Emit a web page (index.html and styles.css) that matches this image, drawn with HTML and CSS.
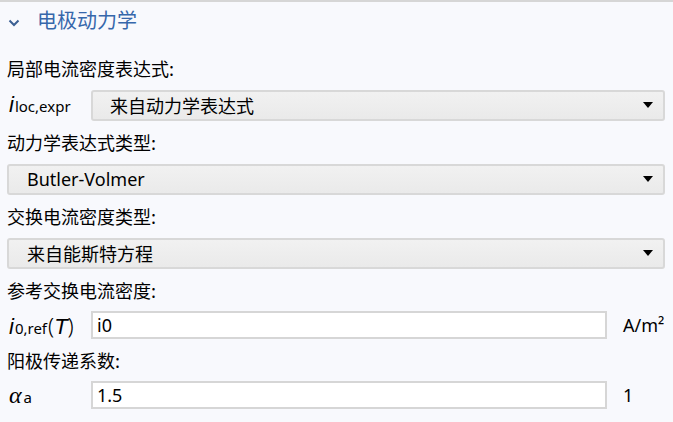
FILE: index.html
```html
<!DOCTYPE html>
<html lang="zh">
<head>
<meta charset="utf-8">
<link rel="stylesheet" href="styles.css">
</head>
<body>
<div class="panel">
  <div class="section-head">
    <svg class="chev" width="12" height="8" viewBox="0 0 12 8"><path d="M1.5 1.5 L6 6 L10.5 1.5" fill="none" stroke="#3b5f93" stroke-width="2"/></svg>
    <span class="section-title">电极动力学</span>
  </div>
  <div class="form">
    <div class="label">局部电流密度表达式:</div>
    <div class="row">
      <div class="sym"><span class="it">i</span><sub>loc,expr</sub></div>
      <div class="select"><span class="sel-text">来自动力学表达式</span><svg class="arrow" width="10" height="6" viewBox="0 0 10 6"><path d="M0 0 H10 L5 6 Z" fill="#000"/></svg></div>
    </div>
    <div class="label">动力学表达式类型:</div>
    <div class="row">
      <div class="select full"><span class="sel-text">Butler-Volmer</span><svg class="arrow" width="10" height="6" viewBox="0 0 10 6"><path d="M0 0 H10 L5 6 Z" fill="#000"/></svg></div>
    </div>
    <div class="label">交换电流密度类型:</div>
    <div class="row">
      <div class="select full"><span class="sel-text">来自能斯特方程</span><svg class="arrow" width="10" height="6" viewBox="0 0 10 6"><path d="M0 0 H10 L5 6 Z" fill="#000"/></svg></div>
    </div>
    <div class="label">参考交换电流密度:</div>
    <div class="row irow">
      <div class="sym"><span class="it">i</span><sub>0,ref</sub><span class="paren">(</span><span class="it">T</span><span class="paren">)</span></div>
      <div class="input">i0</div>
      <div class="unit">A/m²</div>
    </div>
    <div class="label">阳极传递系数:</div>
    <div class="row irow">
      <div class="sym"><span class="it alpha">α</span><sub>a</sub></div>
      <div class="input">1.5</div>
      <div class="unit">1</div>
    </div>
  </div>
</div>
</body>
</html>
```

FILE: styles.css
```css
html, body {
  margin: 0;
  padding: 0;
  background: #f8f9fd;
}
body {
  font-family: "Noto Sans", "Noto Sans CJK SC", sans-serif;
  color: #000;
  width: 673px;
  height: 422px;
  overflow: hidden;
}
.panel {
  border-top: 2px solid #d6d6d6;
}
.section-head {
  height: 34px;
  display: flex;
  align-items: center;
  padding-left: 8px;
}
.chev {
  display: block;
  margin-top: 8px;
}
.section-title {
  margin-left: 17px;
  font-family: "Noto Sans CJK SC", sans-serif;
  font-size: 20px;
  color: #3667ab;
}
.form {
  padding: 14px 8px 0 7px;
}
.label {
  height: 36px;
  line-height: 36px;
  font-family: "Noto Sans CJK SC", sans-serif;
  font-size: 18px;
  white-space: nowrap;
}
.row {
  display: flex;
  align-items: center;
  height: 38px;
}
.irow {
  height: 34px;
}
.sym {
  width: 84px;
  flex: none;
  font-size: 15px;
  white-space: nowrap;
  display: flex;
  align-items: baseline;
  padding-left: 2px;
  box-sizing: border-box;
}
.sym .it {
  font-family: "Liberation Sans", sans-serif;
  font-style: italic;
  font-size: 22px;
  font-weight: normal;
}
.sym .alpha {
  font-family: "Liberation Serif", serif;
  font-size: 24px;
  margin-right: 1px;
}
.sym .paren {
  font-size: 22px;
  font-family: "Noto Sans", sans-serif;
  font-weight: 300;
}
.sym sub {
  font-size: 15px;
  vertical-align: -5px;
  line-height: 1;
  margin-left: 1px;
  margin-right: 1px;
}
.select {
  flex: 1;
  height: 31px;
  box-sizing: border-box;
  border: 2px solid #d8d8d8;
  border-radius: 3px;
  background: linear-gradient(#f1f1f1, #eaeaea);
  display: flex;
  align-items: center;
  padding: 0 10px 0 17px;
}
.select.full {
  padding-left: 18px;
}
.sel-text {
  flex: 1;
  font-size: 18px;
  white-space: nowrap;
}
.arrow {
  display: block;
}
.input {
  width: 516px;
  flex: none;
  height: 28px;
  box-sizing: border-box;
  border: 2px solid #d6d6d6;
  background: #fff;
  font-size: 18px;
  line-height: 24px;
  padding-left: 4px;
}
.unit {
  margin-left: 16px;
  font-size: 18px;
  white-space: nowrap;
}
```
